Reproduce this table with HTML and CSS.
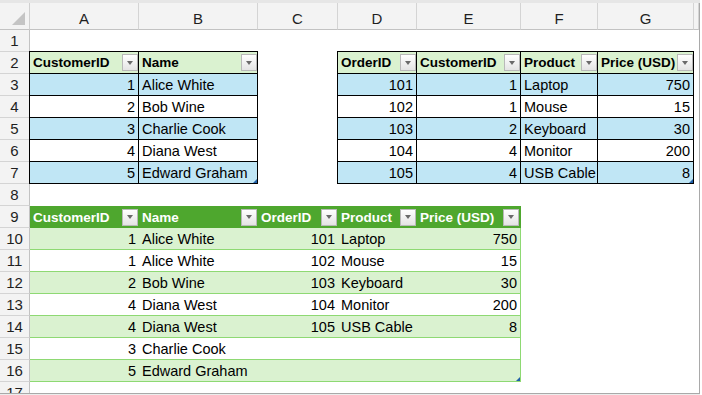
FILE: index.html
```html
<!DOCTYPE html>
<html>
<head>
<meta charset="utf-8">
<title>Sheet</title>
<link rel="stylesheet" href="styles.css">
</head>
<body>
<div class="window">
  <div class="strip"></div>
  <div class="sheet">
    <div class="corner"><svg width="13" height="13" viewBox="0 0 13 13"><polygon points="13,0 13,13 0,13" fill="#c4c4c4"/></svg></div>
    <div class="ch">A</div>
    <div class="ch">B</div>
    <div class="ch">C</div>
    <div class="ch">D</div>
    <div class="ch">E</div>
    <div class="ch">F</div>
    <div class="ch">G</div>
    <div class="ch"></div>

    <div class="rh">1</div>
    <div class="rh">2</div>
    <div class="rh">3</div>
    <div class="rh">4</div>
    <div class="rh">5</div>
    <div class="rh">6</div>
    <div class="rh">7</div>
    <div class="rh">8</div>
    <div class="rh">9</div>
    <div class="rh">10</div>
    <div class="rh">11</div>
    <div class="rh">12</div>
    <div class="rh">13</div>
    <div class="rh">14</div>
    <div class="rh">15</div>
    <div class="rh">16</div>
    <div class="rh">17</div>

    <div class="tbl t1">
      <div class="c hd"><span>CustomerID</span><span class="fb"></span></div>
      <div class="c hd"><span>Name</span><span class="fb"></span></div>
      <div class="c num b">1</div><div class="c b">Alice White</div>
      <div class="c num">2</div><div class="c">Bob Wine</div>
      <div class="c num b">3</div><div class="c b">Charlie Cook</div>
      <div class="c num">4</div><div class="c">Diana West</div>
      <div class="c num b">5</div><div class="c b end">Edward Graham</div>
    </div>

    <div class="tbl t2">
      <div class="c hd"><span>OrderID</span><span class="fb"></span></div>
      <div class="c hd"><span>CustomerID</span><span class="fb"></span></div>
      <div class="c hd"><span>Product</span><span class="fb"></span></div>
      <div class="c hd"><span>Price (USD)</span><span class="fb"></span></div>
      <div class="c num b">101</div><div class="c num b">1</div><div class="c b">Laptop</div><div class="c num b">750</div>
      <div class="c num">102</div><div class="c num">1</div><div class="c">Mouse</div><div class="c num">15</div>
      <div class="c num b">103</div><div class="c num b">2</div><div class="c b">Keyboard</div><div class="c num b">30</div>
      <div class="c num">104</div><div class="c num">4</div><div class="c">Monitor</div><div class="c num">200</div>
      <div class="c num b">105</div><div class="c num b">4</div><div class="c b">USB Cable</div><div class="c num b end">8</div>
    </div>

    <div class="tbl3">
      <div class="g hd3"><span>CustomerID</span><span class="fb"></span></div>
      <div class="g hd3"><span>Name</span><span class="fb"></span></div>
      <div class="g hd3"><span>OrderID</span><span class="fb"></span></div>
      <div class="g hd3"><span>Product</span><span class="fb"></span></div>
      <div class="g hd3 last"><span>Price (USD)</span><span class="fb"></span></div>

      <div class="g num band">1</div><div class="g band">Alice White</div><div class="g num band">101</div><div class="g band">Laptop</div><div class="g num band last">750</div>
      <div class="g num">1</div><div class="g">Alice White</div><div class="g num">102</div><div class="g">Mouse</div><div class="g num last">15</div>
      <div class="g num band">2</div><div class="g band">Bob Wine</div><div class="g num band">103</div><div class="g band">Keyboard</div><div class="g num band last">30</div>
      <div class="g num">4</div><div class="g">Diana West</div><div class="g num">104</div><div class="g">Monitor</div><div class="g num last">200</div>
      <div class="g num band">4</div><div class="g band">Diana West</div><div class="g num band">105</div><div class="g band">USB Cable</div><div class="g num band last">8</div>
      <div class="g num">3</div><div class="g">Charlie Cook</div><div class="g"></div><div class="g"></div><div class="g last"></div>
      <div class="g num band">5</div><div class="g band">Edward Graham</div><div class="g band"></div><div class="g band"></div><div class="g band last end">&nbsp;</div>
    </div>
  </div>
  <div class="bottom"></div>
</div>
</body>
</html>
```

FILE: styles.css
```css
* {
  box-sizing: border-box;
  margin: 0;
  padding: 0;
}

html, body {
  background: #ffffff;
  overflow: hidden;
}

body {
  font-family: "Liberation Sans", Arial, sans-serif;
  font-size: 14.5px;
  color: #000000;
}

.window {
  width: 702px;
  height: 395px;
  display: flex;
  flex-direction: column;
  background: #ffffff;
}

.strip {
  height: 3px;
  flex: none;
  width: 700px;
  background: #e6e6e6;
}

.sheet {
  flex: none;
  height: 390px;
  width: 700px;
  border-right: 1px solid #a9a9a9;
  overflow: hidden;
  display: grid;
  grid-template-columns: 30px 109px 119px 80px 79px 104px 77px 96px 1fr;
  grid-template-rows: 27px repeat(17, 22px);
  align-content: start;
}

.bottom {
  flex: none;
  height: 2px;
  width: 700px;
  border-top: 1px solid #a9a9a9;
  background: #ececec;
}

.corner {
  background: #f3f3f3;
  border-right: 1px solid #cfcfcf;
  border-bottom: 1px solid #c2c2c2;
  display: flex;
  align-items: flex-end;
  justify-content: flex-end;
  padding: 0 4px 4px 0;
}

.ch {
  background: #f3f3f3;
  border-right: 1px solid #d4d4d4;
  border-bottom: 1px solid #c2c2c2;
  display: flex;
  align-items: center;
  justify-content: center;
  padding-top: 4px;
  font-size: 15px;
  color: #1f1f1f;
}

.rh {
  grid-column: 1;
  background: #f3f3f3;
  border-right: 1px solid #c2c2c2;
  border-bottom: 1px solid #d4d4d4;
  display: flex;
  align-items: center;
  justify-content: center;
  font-size: 15px;
  color: #1f1f1f;
}

/* Bordered source tables (top) */
.tbl {
  display: grid;
  margin: -1px 0 0 -1px;
  border-top: 1px solid #000000;
  border-left: 1px solid #000000;
  grid-auto-rows: 22px;
}

.t1 {
  grid-column: 2 / 4;
  grid-row: 3 / 9;
  grid-template-columns: 109px 119px;
}

.t2 {
  grid-column: 5 / 9;
  grid-row: 3 / 9;
  grid-template-columns: 79px 104px 77px 96px;
}

.c {
  border-right: 1px solid #000000;
  border-bottom: 1px solid #000000;
  display: flex;
  align-items: center;
  padding: 1px 3px 0 3px;
  white-space: nowrap;
  overflow: hidden;
  background: #ffffff;
}

.c.b {
  background: #c0e6f5;
}

.c.hd {
  background: #daf2d0;
  font-weight: bold;
  font-size: 13.5px;
  justify-content: space-between;
  padding: 0 0 0 3px;
}

.num {
  justify-content: flex-end;
}

.end {
  position: relative;
}

.end::after {
  content: "";
  position: absolute;
  right: 0;
  bottom: 0;
  width: 0;
  height: 0;
  border-left: 4px solid transparent;
  border-bottom: 4px solid #1f5fa8;
}

/* Filter button */
.fb {
  flex: none;
  width: 16px;
  height: 17px;
  border: 1px solid #b9b9b9;
  background: linear-gradient(#ffffff, #e4e4e4);
  display: flex;
  align-items: center;
  justify-content: center;
}

.fb::after {
  content: "";
  width: 0;
  height: 0;
  border-left: 3.5px solid transparent;
  border-right: 3.5px solid transparent;
  border-top: 4px solid #6a6a6a;
}

/* Merged result table (bottom) */
.tbl3 {
  grid-column: 2 / 7;
  grid-row: 10 / 18;
  display: grid;
  grid-template-columns: 109px 119px 80px 79px 104px;
  grid-auto-rows: 22px;
}

.g {
  display: flex;
  align-items: center;
  padding: 1px 3px 0 3px;
  white-space: nowrap;
  border-bottom: 1px solid #8ed973;
  background: #ffffff;
}

.g.band {
  background: #daf2d0;
}

.g.last {
  border-right: 1px solid #8ed973;
}

.g.hd3 {
  background: #4ea72e;
  color: #ffffff;
  font-weight: bold;
  font-size: 13.5px;
  justify-content: space-between;
  padding: 0 1px 0 3px;
  border-bottom: none;
}

.g.hd3.last {
  border-right: 1px solid #4ea72e;
}
```
